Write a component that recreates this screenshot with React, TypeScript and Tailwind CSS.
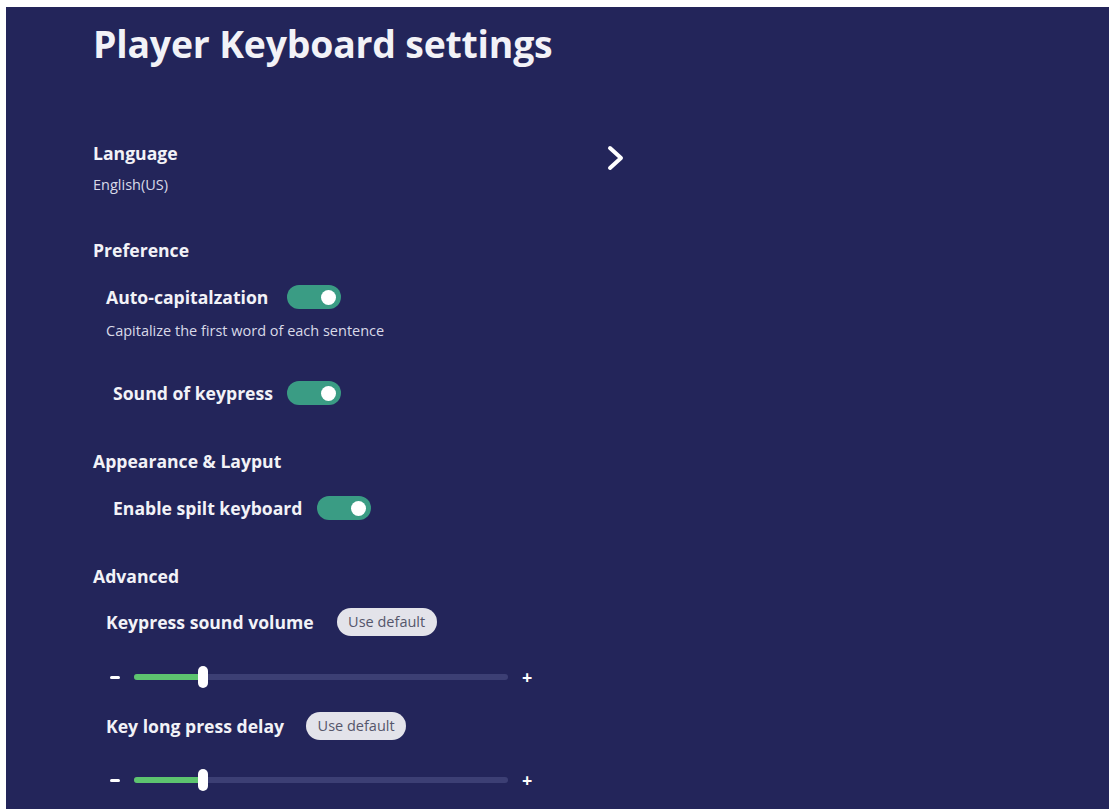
import { useState } from "react"

function Toggle({ on = true }: { on?: boolean }) {
  return (
    <div
      className={`flex h-[24px] w-[54px] shrink-0 items-center rounded-full px-[5px] ${
        on ? "justify-end bg-[#3a9c84]" : "justify-start bg-[#4a4c7a]"
      }`}
    >
      <div className="h-[15px] w-[15px] rounded-full bg-white" />
    </div>
  )
}

function Slider({ value }: { value: number }) {
  return (
    <div className="flex h-[24px] items-center pl-[17px]">
      <div className="h-[3px] w-[10px] rounded-sm bg-white" />
      <div className="relative ml-[14px] h-[6px] w-[374px] rounded-full bg-[#3c3f74]">
        <div className="absolute left-0 top-0 h-full rounded-full bg-[#5dc46f]" style={{ width: `${value}%` }} />
        <div
          className="absolute top-1/2 h-[22px] w-[10px] -translate-y-1/2 rounded-[5px] bg-white"
          style={{ left: `calc(${value}% - 3px)` }}
        />
      </div>
      <span className="ml-[14px] text-[18px] font-bold leading-none text-white">+</span>
    </div>
  )
}

function DefaultPill() {
  return (
    <button className="flex h-[28px] w-[100px] items-center justify-center rounded-full bg-[#e3e3ea] text-[14.5px] text-[#55566a]">
      Use default
    </button>
  )
}

export default function App() {
  const [volume] = useState(18)
  const [delay] = useState(18)

  return (
    <div className="h-[809px] w-full bg-white pl-[6px] pr-[3px] pt-[7px]" style={{ fontFamily: '"Open Sans", "Noto Sans", sans-serif' }}>
      <div className="flex h-full flex-col bg-[#23255a] pl-[87px] text-[#f2f2f7]">
        {/* Title */}
        <div className="flex h-[74px] items-center">
          <h1 className="text-[37.4px] font-bold tracking-[-0.2px]">Player Keyboard settings</h1>
        </div>

        {/* Language */}
        <div className="mt-[60px] flex h-[24px] w-[533px] items-center justify-between">
          <span className="text-[17.6px] font-bold">Language</span>
          <svg width="20" height="26" viewBox="0 0 20 26" className="translate-y-[5px]">
            <polyline points="4,3 15,13 4,23" fill="none" stroke="white" strokeWidth="4" strokeLinecap="round" strokeLinejoin="round" />
          </svg>
        </div>
        <div className="mt-[10px] flex h-[20px] items-center text-[14.5px] text-[#d9dae8]">English(US)</div>

        {/* Preference */}
        <div className="mt-[43px] flex h-[24px] items-center text-[17.6px] font-bold">Preference</div>
        <div className="mt-[21px] flex h-[28px] items-center gap-[19px] pl-[13px]">
          <span className="text-[17.6px] font-bold">Auto-capitalzation</span>
          <Toggle />
        </div>
        <div className="mt-[10px] flex h-[20px] items-center pl-[13px] text-[14.5px] text-[#d9dae8]">
          Capitalize the first word of each sentence
        </div>
        <div className="mt-[38px] flex h-[28px] items-center gap-[14px] pl-[20px]">
          <span className="text-[17.6px] font-bold">Sound of keypress</span>
          <Toggle />
        </div>

        {/* Appearance */}
        <div className="mt-[42px] flex h-[24px] items-center text-[17.6px] font-bold">Appearance &amp; Layput</div>
        <div className="mt-[21px] flex h-[28px] items-center gap-[15px] pl-[20px]">
          <span className="text-[17.6px] font-bold">Enable spilt keyboard</span>
          <Toggle />
        </div>

        {/* Advanced */}
        <div className="mt-[42px] flex h-[24px] items-center text-[17.6px] font-bold">Advanced</div>
        <div className="mt-[19px] flex h-[30px] items-center gap-[23px] pl-[13px]">
          <span className="text-[17.6px] font-bold">Keypress sound volume</span>
          <DefaultPill />
        </div>
        <div className="mt-[28px]">
          <Slider value={volume} />
        </div>
        <div className="mt-[22px] flex h-[30px] items-center gap-[22px] pl-[13px]">
          <span className="text-[17.6px] font-bold">Key long press delay</span>
          <DefaultPill />
        </div>
        <div className="mt-[27px]">
          <Slider value={delay} />
        </div>
      </div>
    </div>
  )
}
